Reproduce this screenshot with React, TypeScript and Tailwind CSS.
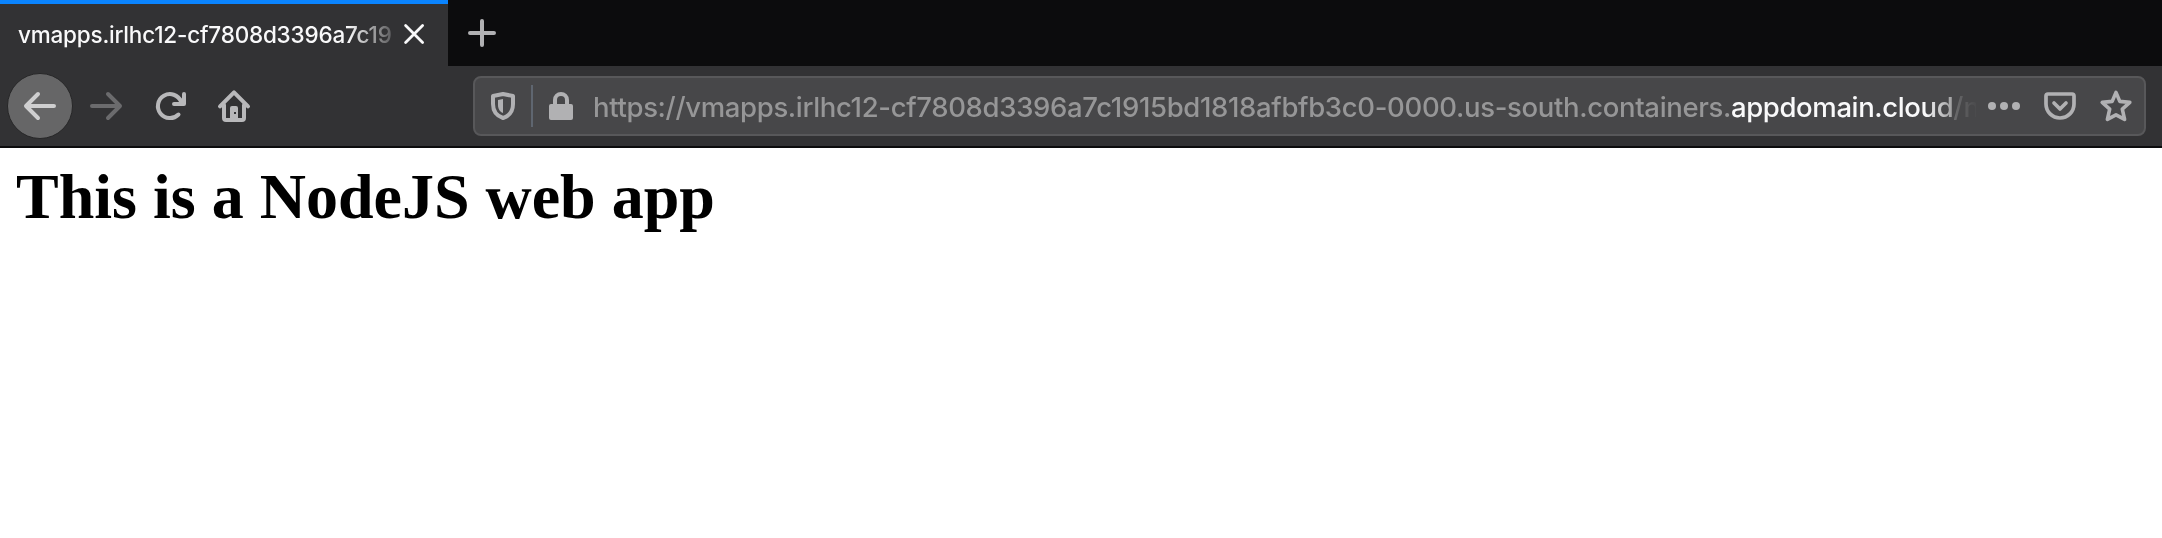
import React from "react";

type IconProps = { className?: string; children: React.ReactNode };

function Icon({ className = "", children }: IconProps) {
  return (
    <svg
      viewBox="0 0 32 32"
      className={"block h-8 w-8 shrink-0 overflow-visible " + className}
      fill="none"
      stroke="currentColor"
      strokeWidth="4"
      strokeLinecap="round"
      strokeLinejoin="round"
      aria-hidden="true"
    >
      {children}
    </svg>
  );
}

function TabStrip() {
  return (
    <div className="flex h-[66px] bg-[#0c0c0d]">
      <div className="flex h-full w-[448px] shrink-0 items-center border-t-4 border-[#0a84ff] bg-[#323234] pl-[18px]">
        <div className="w-[374px] whitespace-nowrap text-[22.5px] leading-[30px] font-medium tracking-[-0.2px] text-[#f9f9fa] [mask-image:linear-gradient(to_right,black_330px,transparent_386px)]">
          vmapps.irlhc12-cf7808d3396a7c19
        </div>
        <Icon className="ml-[6px] text-[#f9f9fa]">
          <path strokeWidth="2.8" d="M7.6 6.6l17 17M24.6 6.6l-17 17" />
        </Icon>
      </div>
      <button className="ml-[18px] flex items-center text-[#b1b1b3]" aria-label="New tab">
        <Icon>
          <path d="M16 4v24M4 16h24" />
        </Icon>
      </button>
    </div>
  );
}

function Toolbar() {
  return (
    <div className="flex h-[82px] items-center border-b-2 border-[#0c0c0d] bg-[#323234] pl-[7px] text-[#b8b8ba]">
      <button
        className="flex h-[66px] w-[66px] items-center justify-center rounded-full border border-[#272728] bg-[#666667] text-[#cfcfd0]"
        aria-label="Back"
      >
        <Icon>
          <path d="M30 16H3M14 4L2 16l12 12" />
        </Icon>
      </button>
      <Icon className="ml-[17px] text-[#6b6b6d]">
        <path d="M2 16h27M18 4l12 12-12 12" />
      </Icon>
      <Icon className="ml-8">
        <path d="M24.5 24.5A12 12 0 1 1 27 11.5" />
        <path d="M30 4v10H20" />
        <path fill="currentColor" stroke="none" d="M25 9l5-1v6h-5z" />
      </Icon>
      <Icon className="ml-8">
        <path d="M2 16.4L16 2.4l14 14" />
        <path d="M6 15v13a2 2 0 0 0 2 2h16a2 2 0 0 0 2-2V15" />
        <path
          fill="currentColor"
          stroke="none"
          fillRule="evenodd"
          d="M12 30V18a2 2 0 0 1 2-2h4a2 2 0 0 1 2 2v12zM16 22v2h2v-2z"
        />
      </Icon>
      <AddressBar />
    </div>
  );
}

function AddressBar() {
  return (
    <div className="ml-[223px] flex h-[60px] w-[1673px] items-center rounded-lg border-2 border-[#58585a] bg-[#474749] pl-[12px] text-[#b1b1b3]">
      <Icon>
        <path d="M16 4L6 6v8c0 7 4 12 10 14 6-2 10-7 10-14V6z" />
        <path fill="currentColor" stroke="none" d="M16 9l-5 1v5c0 4 2 7 5 8z" />
      </Icon>
      <div className="ml-[12px] h-[42px] w-[2px] bg-[#5f6670]" />
      <Icon className="ml-[12px]">
        <path strokeLinecap="butt" d="M10 15v-5a6 6 0 0 1 12 0v5" />
        <rect x="4" y="14" width="24" height="16" rx="2" fill="currentColor" stroke="none" />
      </Icon>
      <div className="ml-[16px] w-[1383px] pt-[2px] whitespace-nowrap text-[27.5px] leading-[40px] font-medium text-[#969697] [mask-image:linear-gradient(to_right,black_1332px,transparent_1386px)]">
        <span className="tracking-[-0.34px]">
          https://vmapps.irlhc12-cf7808d3396a7c1915bd1818afbfb3c0-0000.us-south.containers.
        </span>
        <span className="tracking-[-0.38px] text-[#f9f9fa]">appdomain.cloud</span>
        <span>/n</span>
      </div>
      <Icon className="ml-[12px]">
        <g fill="currentColor" stroke="none">
          <circle cx="4" cy="16" r="4" />
          <circle cx="16" cy="16" r="4" />
          <circle cx="28" cy="16" r="4" />
        </g>
      </Icon>
      <Icon className="ml-6">
        <path strokeWidth="3.7" d="M4 4h24a2 2 0 0 1 2 2v8a14 14 0 0 1-28 0V6a2 2 0 0 1 2-2z" />
        <path strokeWidth="3.7" d="M10 13l6 6 6-6" />
      </Icon>
      <Icon className="ml-6">
        <path
          strokeWidth="3.6"
          d="M16 2.4l3.8 9 10 1-7.5 6.7 2.3 10.3L16 24.8 7.4 29.4l2.3-10.3L2.2 12.4l10-1z"
        />
      </Icon>
    </div>
  );
}

export default function App() {
  return (
    <div className="h-[538px] w-[2162px] overflow-hidden bg-white font-['Inter',sans-serif]">
      <TabStrip />
      <Toolbar />
      <main className="px-4 pt-[12px]">
        <h1 className="font-['Liberation_Serif',serif] text-[64px] leading-[74px] font-bold text-black">
          This is a NodeJS web app
        </h1>
      </main>
    </div>
  );
}
